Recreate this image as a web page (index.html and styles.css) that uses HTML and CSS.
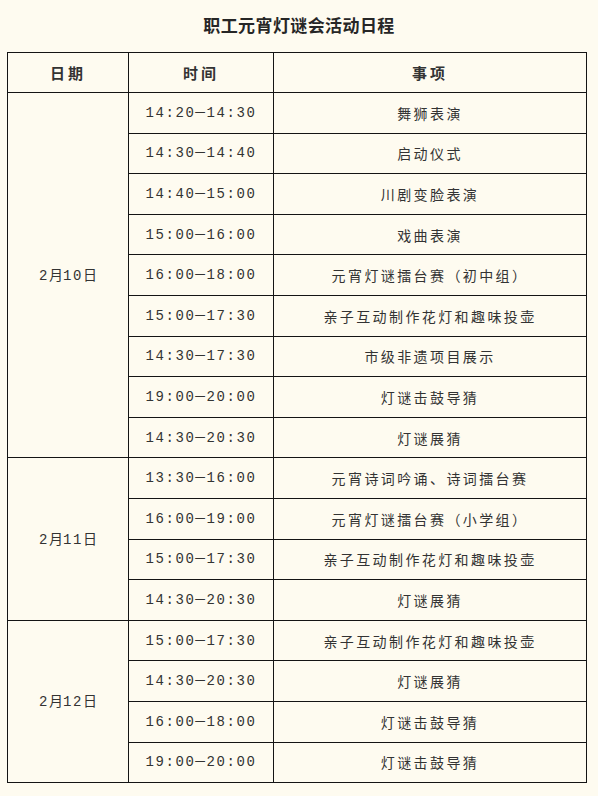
FILE: index.html
```html
<!DOCTYPE html>
<html lang="zh">
<head>
<meta charset="utf-8">
<link rel="stylesheet" href="styles.css">
</head>
<body>
<div class="page">
  <h1 class="title">职工元宵灯谜会活动日程</h1>
  <table class="schedule">
    <colgroup>
      <col class="c-date">
      <col class="c-time">
      <col class="c-item">
    </colgroup>
    <thead>
      <tr><th>日期</th><th>时间</th><th>事项</th></tr>
    </thead>
    <tbody>
      <tr><td class="date" rowspan="9"><span class="num">2</span>月<span class="num">10</span>日</td><td class="time">14:20<span class="dash">—</span>14:30</td><td>舞狮表演</td></tr>
      <tr><td class="time">14:30<span class="dash">—</span>14:40</td><td>启动仪式</td></tr>
      <tr><td class="time">14:40<span class="dash">—</span>15:00</td><td>川剧变脸表演</td></tr>
      <tr><td class="time">15:00<span class="dash">—</span>16:00</td><td>戏曲表演</td></tr>
      <tr><td class="time">16:00<span class="dash">—</span>18:00</td><td>元宵灯谜擂台赛（初中组）</td></tr>
      <tr><td class="time">15:00<span class="dash">—</span>17:30</td><td>亲子互动制作花灯和趣味投壶</td></tr>
      <tr><td class="time">14:30<span class="dash">—</span>17:30</td><td>市级非遗项目展示</td></tr>
      <tr><td class="time">19:00<span class="dash">—</span>20:00</td><td>灯谜击鼓导猜</td></tr>
      <tr><td class="time">14:30<span class="dash">—</span>20:30</td><td>灯谜展猜</td></tr>
      <tr><td class="date" rowspan="4"><span class="num">2</span>月<span class="num">11</span>日</td><td class="time">13:30<span class="dash">—</span>16:00</td><td>元宵诗词吟诵、诗词擂台赛</td></tr>
      <tr><td class="time">16:00<span class="dash">—</span>19:00</td><td>元宵灯谜擂台赛（小学组）</td></tr>
      <tr><td class="time">15:00<span class="dash">—</span>17:30</td><td>亲子互动制作花灯和趣味投壶</td></tr>
      <tr><td class="time">14:30<span class="dash">—</span>20:30</td><td>灯谜展猜</td></tr>
      <tr><td class="date" rowspan="4"><span class="num">2</span>月<span class="num">12</span>日</td><td class="time">15:00<span class="dash">—</span>17:30</td><td>亲子互动制作花灯和趣味投壶</td></tr>
      <tr><td class="time">14:30<span class="dash">—</span>20:30</td><td>灯谜展猜</td></tr>
      <tr><td class="time">16:00<span class="dash">—</span>18:00</td><td>灯谜击鼓导猜</td></tr>
      <tr><td class="time">19:00<span class="dash">—</span>20:00</td><td>灯谜击鼓导猜</td></tr>
    </tbody>
  </table>
</div>
</body>
</html>
```
FILE: styles.css
```css
html, body {
  margin: 0;
  padding: 0;
  background: #fefbf0;
}
.page {
  width: 598px;
  height: 796px;
  padding: 15px 0 0 7px;
  box-sizing: border-box;
  font-family: "Noto Sans CJK SC", "Noto Sans", sans-serif;
  color: #333;
}
.title {
  margin: 0 0 17px -7px;
  font-size: 17px;
  line-height: 20px;
  font-weight: bold;
  letter-spacing: 0.4px;
  text-align: center;
  color: #262626;
}
.schedule {
  border-collapse: collapse;
  width: 579px;
  table-layout: fixed;
}
.c-date { width: 121px; }
.c-time { width: 145px; }
.c-item { width: 313px; }
.schedule th,
.schedule td {
  border: 1px solid #141414;
  padding: 0;
  text-align: center;
  vertical-align: middle;
  font-size: 14px;
  letter-spacing: 2.4px;
  font-weight: normal;
  height: 39.6px;
  line-height: 18px;
}
.schedule th {
  font-weight: bold;
  font-size: 15px;
  letter-spacing: 3px;
  height: 39px;
}
.schedule td.time,
.num {
  font-family: "Liberation Mono", "DejaVu Sans Mono", monospace;
  letter-spacing: 1.6px;
  font-size: 14px;
}
.dash {
  display: inline-block;
  transform: scaleX(1.15);
  margin: 0 0.5px;
  position: relative;
  top: -1px;
}
.schedule td.date {
  letter-spacing: 0;
}
```
